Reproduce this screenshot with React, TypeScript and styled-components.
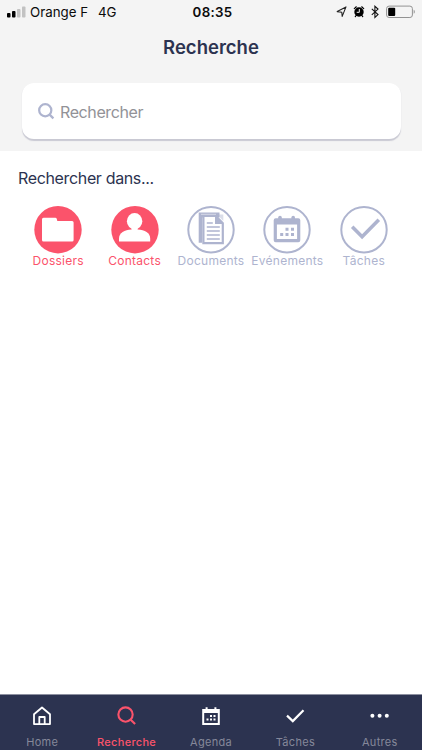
import React from 'react';
import styled, { createGlobalStyle } from 'styled-components';

const NAVY = '#2c3350';
const CORAL = '#fb536b';
const MUTED = '#aeb4cf';

const GlobalStyle = createGlobalStyle`
  *, *::before, *::after { box-sizing: border-box; }
  body { margin: 0; background: #fff; }
  svg { display: block; flex: none; }
`;

const Screen = styled.div`
  width: 422px;
  height: 750px;
  display: flex;
  flex-direction: column;
  overflow: hidden;
  background: #fff;
  color: ${NAVY};
  font-family: Inter, "Liberation Sans", sans-serif;
`;

const Header = styled.header`
  height: 151px;
  flex: none;
  background: #f4f4f4;
`;

const StatusBar = styled.div`
  height: 24px;
  display: grid;
  grid-template-columns: 1fr auto 1fr;
  align-items: center;
  padding: 0 6px 0 7px;
  color: #0b0b0b;
  font-size: 13.3px;
  line-height: 24px;
`;

const Carrier = styled.div`
  display: flex;
  align-items: center;
`;

const CarrierName = styled.span`
  margin: 0 10px 0 4px;
`;

const Clock = styled.span`
  padding-left: 2px;
  font-weight: 600;
  letter-spacing: 0.3px;
`;

const StatusIcons = styled.div`
  display: flex;
  align-items: center;
  justify-content: flex-end;
`;

const Title = styled.h1`
  margin: 9px 0 0;
  height: 29px;
  line-height: 29px;
  font-size: 18.5px;
  font-weight: 600;
  text-align: center;
`;

const SearchBox = styled.label`
  display: flex;
  align-items: center;
  gap: 5px;
  height: 56px;
  margin: 21px 21px 0 22px;
  padding: 1px 0 0 16px;
  border-radius: 12px;
  background: #fff;
  box-shadow: 0 1.5px 1px #c9c9d3;
`;

const SearchInput = styled.input`
  flex: 1;
  min-width: 0;
  padding: 0;
  border: 0;
  outline: 0;
  background: transparent;
  font: 400 16px/24px Inter, "Liberation Sans", sans-serif;
  letter-spacing: -0.4px;
  &::placeholder { color: #929297; opacity: 1; }
`;

const Content = styled.main`
  flex: 1;
`;

const SectionTitle = styled.h2`
  margin: 15px 0 0 18px;
  height: 24px;
  line-height: 24px;
  font-size: 16px;
  font-weight: 400;
  letter-spacing: -0.35px;
`;

const Filters = styled.div`
  display: grid;
  grid-template-columns: repeat(5, 1fr);
  padding: 0 20px;
  margin-top: 16px;
`;

const Filter = styled.button<{ $active?: boolean }>`
  display: flex;
  flex-direction: column;
  align-items: center;
  padding: 0;
  border: 0;
  background: none;
  color: ${(p) => (p.$active ? CORAL : MUTED)};
  font: 400 12px/14px Inter, "Liberation Sans", sans-serif;
  letter-spacing: 0.25px;
  white-space: nowrap;
`;

const TabBar = styled.nav`
  height: 56px;
  flex: none;
  display: grid;
  grid-template-columns: repeat(5, 1fr);
  border-top: 1px solid #8d90a0;
  background: ${NAVY};
`;

const Tab = styled.a<{ $active?: boolean }>`
  display: flex;
  flex-direction: column;
  align-items: center;
  padding-top: 11px;
  gap: 8px;
  color: ${(p) => (p.$active ? CORAL : '#85889a')};
  font-size: 11px;
  line-height: 16px;
  font-weight: ${(p) => (p.$active ? 500 : 400)};
  letter-spacing: 0.3px;
  svg { color: ${(p) => (p.$active ? CORAL : '#fff')}; }
`;

const Signal = () => (
  <svg width="19" height="12" viewBox="0 0 19 12">
    <rect x="0" y="7" width="3.5" height="4.5" rx="0.9" fill="#000" />
    <rect x="5" y="5" width="3.5" height="6.5" rx="0.9" fill="#000" />
    <rect x="10" y="3" width="3.5" height="8.5" rx="0.9" fill="#c2c2c2" />
    <rect x="15" y="0.5" width="3.5" height="11" rx="0.9" fill="#c2c2c2" />
  </svg>
);

const DeviceIcons = () => (
  <svg width="80" height="16" viewBox="0 0 80 16">
    <path d="M1.2 7.6 10 2.9 6.2 12.4 5.8 8.2Z" fill="none" stroke="#222" strokeWidth="1.1" strokeLinejoin="round" />
    <circle cx="23" cy="8" r="4.7" fill="#000" />
    <path d="M18.3 4.6 20.3 2.8M27.7 4.6 25.7 2.8M19.8 11.9 19.3 12.5M26.2 11.9 26.7 12.5" stroke="#000" strokeWidth="1.2" strokeLinecap="round" />
    <path d="M23.3 5v3.3H20.7" fill="none" stroke="#f4f4f4" strokeWidth="1" />
    <path d="M35.8 4.9 42 10.6 38.9 13.4V2.3L42 5.1 35.8 10.8" fill="none" stroke="#111" strokeWidth="1.1" />
    <rect x="50.6" y="2.1" width="25.8" height="11.4" rx="2.5" fill="none" stroke="#929292" strokeWidth="1" />
    <rect x="52.2" y="3.7" width="7" height="8.2" rx="1" fill="#000" />
    <path d="M77.7 5.8c1.5.5 1.5 3.5 0 4Z" fill="#929292" />
  </svg>
);

const SearchIcon = ({ size, stroke, color }: { size: number; stroke: number; color: string }) => (
  <svg width={size} height={size} viewBox="0 0 19 19" fill="none" stroke={color} strokeWidth={stroke}>
    <circle cx="8.1" cy="8.1" r="6.8" />
    <path d="m13 13 4.2 4.2" />
  </svg>
);

const Disc = ({ active, children }: { active?: boolean; children: React.ReactNode }) => (
  <svg width="48" height="48" viewBox="0 0 48 48">
    {active ? (
      <circle cx="24" cy="23.7" r="23.7" fill={CORAL} />
    ) : (
      <circle cx="24" cy="23.7" r="22.7" fill="#fff" stroke={MUTED} strokeWidth="2" />
    )}
    {children}
  </svg>
);

const FolderGlyph = () => (
  <path d="M8 13.2q0-1.5 1.5-1.5h11.8q1.2 0 1.5 1.2l.5 2.2h14.8q1.5 0 1.5 1.5v17.3q0 1.5-1.5 1.5H9.5Q8 35.4 8 33.9Z" fill="#fff" />
);

const PersonGlyph = () => (
  <g fill="#fff">
    <ellipse cx="23.6" cy="15.3" rx="7.7" ry="8.2" />
    <path d="M20.6 21h6v3.200h-6Z" />
    <path d="M8 35.400v-2.800C8 27 13.500 23.700 20.500 23.500h6.200C33.700 23.700 39.200 27 39.200 32.600v2.800Z" />
  </g>
);

const DocumentsGlyph = () => (
  <g>
    <path d="M11.700 6.500h20.800v5h-17.200v25.300h-3.600Z" fill={MUTED} />
    <path d="M16.400 9.800h12.200l7.200 7.500v19.900H16.400Z" fill="#fff" stroke={MUTED} strokeWidth="2.2" />
    <path d="M14 8.300h15" stroke="#fff" strokeWidth="0.5" />
    <path d="M28 9.200v8.800h8.400Z" fill={MUTED} />
    <path d="M31 9.500 36.300 15V8.600h-5.300Z" fill={MUTED} fillOpacity="0.45" />
    <path d="M19.800 17h6M19.800 21h13M19.800 25h13M19.800 29h13M19.800 33h13" stroke={MUTED} strokeWidth="1.4" />
  </g>
);

const CalendarGlyph = () => (
  <g fill={MUTED}>
    <path fillRule="evenodd" d="M12.7 12.3h22.6q2 0 2 2v20q0 2-2 2H12.7q-2 0-2-2v-20q0-2 2-2ZM13.9 18.5V33h20.2V18.5Z" />
    <rect x="15.2" y="9.8" width="3.6" height="5" rx="1.8" />
    <rect x="28.4" y="9.8" width="3.6" height="5" rx="1.8" />
    <path d="M22.5 21.8h3v3h-3zM28 21.8h3v3h-3zM17.2 27h3v3h-3zM22.5 27h3v3h-3zM28 27h3v3h-3z" />
  </g>
);

const CheckGlyph = () => (
  <path d="m12.2 20.8 9.9 10L38.8 13.8" fill="none" stroke={MUTED} strokeWidth="3.6" />
);

const HomeIcon = () => (
  <svg width="20" height="20" viewBox="0 0 20 20" fill="none" stroke="currentColor" strokeWidth="1.8" strokeLinejoin="round">
    <path d="M2 18.1V8.3L10 1.5l8 6.8v9.8Z" />
    <path d="M7.3 18v-7h5.4v7" />
  </svg>
);

const AgendaIcon = () => (
  <svg width="20" height="20" viewBox="0 0 20 20" fill="currentColor">
    <path fillRule="evenodd" d="M1.2 3.1h17.600V18.900H1.200ZM3.200 7V16.900h13.600V7Z" />
    <path d="M4.6 1.200h2v3h-2zM13.400 1.200h2v3h-2zM9 9h2v2H9zM12.500 9h2v2h-2zM5.500 12.500h2v2h-2zM9 12.500h2v2H9zM12.500 12.500h2v2h-2z" />
  </svg>
);

const CheckIcon = () => (
  <svg width="20" height="20" viewBox="0 0 20 20" fill="none" stroke="currentColor" strokeWidth="2.2">
    <path d="m2 9.600 5.800 5.500L18.500 4.300" />
  </svg>
);

const MoreIcon = () => (
  <svg width="20" height="20" viewBox="0 0 20 20" fill="currentColor">
    <circle cx="2.4" cy="9.8" r="2" />
    <circle cx="9.6" cy="9.8" r="2" />
    <circle cx="16.8" cy="9.8" r="2" />
  </svg>
);

const filters = [
  { label: 'Dossiers', active: true, glyph: <FolderGlyph /> },
  { label: 'Contacts', active: true, glyph: <PersonGlyph /> },
  { label: 'Documents', active: false, glyph: <DocumentsGlyph /> },
  { label: 'Evénements', active: false, glyph: <CalendarGlyph /> },
  { label: 'Tâches', active: false, glyph: <CheckGlyph /> },
];

const tabs = [
  { label: 'Home', icon: <HomeIcon /> },
  { label: 'Recherche', active: true, icon: <SearchIcon size={20} stroke={2} color={CORAL} /> },
  { label: 'Agenda', icon: <AgendaIcon /> },
  { label: 'Tâches', icon: <CheckIcon /> },
  { label: 'Autres', icon: <MoreIcon /> },
];

export default function App() {
  return (
    <>
      <GlobalStyle />
      <Screen>
        <Header>
          <StatusBar>
            <Carrier>
              <Signal />
              <CarrierName>Orange F</CarrierName>
              <span>4G</span>
            </Carrier>
            <Clock>08:35</Clock>
            <StatusIcons>
              <DeviceIcons />
            </StatusIcons>
          </StatusBar>
          <Title>Recherche</Title>
          <SearchBox>
            <SearchIcon size={17} stroke={2.5} color={MUTED} />
            <SearchInput placeholder="Rechercher" />
          </SearchBox>
        </Header>
        <Content>
          <SectionTitle>Rechercher dans...</SectionTitle>
          <Filters>
            {filters.map((f) => (
              <Filter key={f.label} $active={f.active}>
                <Disc active={f.active}>{f.glyph}</Disc>
                {f.label}
              </Filter>
            ))}
          </Filters>
        </Content>
        <TabBar>
          {tabs.map((t) => (
            <Tab key={t.label} $active={t.active}>
              {t.icon}
              {t.label}
            </Tab>
          ))}
        </TabBar>
      </Screen>
    </>
  );
}
